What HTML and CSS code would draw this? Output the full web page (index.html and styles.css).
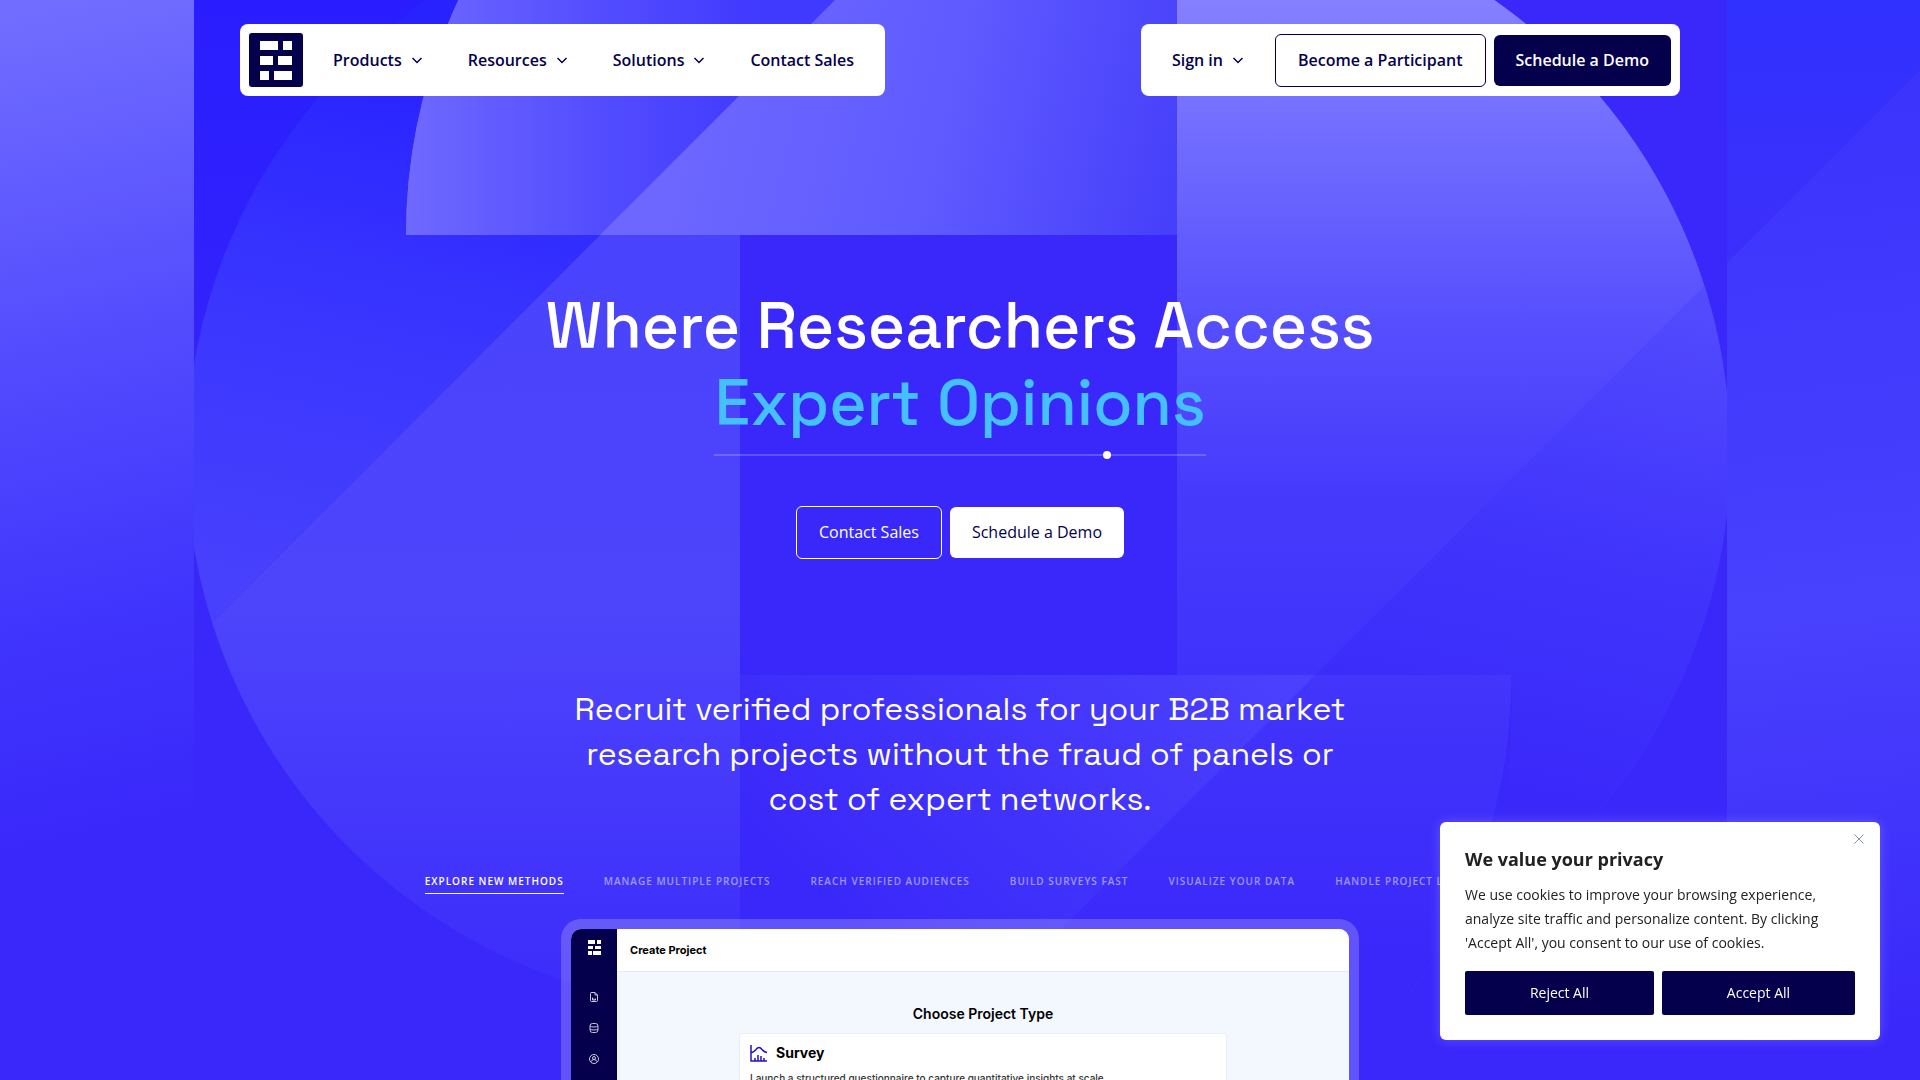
FILE: index.html
```html
<!DOCTYPE html>
<html lang="en">
<head>
    <meta charset="UTF-8">
    <meta name="viewport" content="width=device-width, initial-scale=1">
    <title>Where Researchers Access Expert Opinions</title>
    <link rel="stylesheet" href="styles.css">
</head>
<body>

<svg class="backdrop" viewBox="0 0 1920 1080" preserveAspectRatio="xMidYMin slice" aria-hidden="true">
    <defs>
        <linearGradient id="sideLeft" gradientUnits="userSpaceOnUse" x1="0" y1="0" x2="190" y2="820">
            <stop offset="0" stop-color="#726fff"/>
            <stop offset=".45" stop-color="#5049fe"/>
            <stop offset=".75" stop-color="#3f34fd"/>
            <stop offset="1" stop-color="#3a28fa"/>
        </linearGradient>
        <linearGradient id="corner" gradientUnits="userSpaceOnUse" x1="194" y1="0" x2="194" y2="620">
            <stop offset="0" stop-color="#291dff"/>
            <stop offset="1" stop-color="#3a28fa"/>
        </linearGradient>
        <linearGradient id="discLeftTop" gradientUnits="userSpaceOnUse" x1="440" y1="60" x2="320" y2="600">
            <stop offset="0" stop-color="#2822ff"/>
            <stop offset=".5" stop-color="#3a36ff"/>
            <stop offset="1" stop-color="#4740fc"/>
        </linearGradient>
        <linearGradient id="discLeft" gradientUnits="userSpaceOnUse" x1="0" y1="235" x2="0" y2="1060">
            <stop offset="0" stop-color="#4a43fd"/>
            <stop offset=".45" stop-color="#4d45fc"/>
            <stop offset="1" stop-color="#3a28fa"/>
        </linearGradient>
        <linearGradient id="quarterA" gradientUnits="userSpaceOnUse" x1="406" y1="0" x2="760" y2="0">
            <stop offset="0" stop-color="#6f69ff"/>
            <stop offset=".5" stop-color="#554fff"/>
            <stop offset="1" stop-color="#4039ff"/>
        </linearGradient>
        <linearGradient id="quarterB" gradientUnits="userSpaceOnUse" x1="700" y1="60" x2="1177" y2="170">
            <stop offset="0" stop-color="#6d67ff"/>
            <stop offset=".5" stop-color="#5f5bff"/>
            <stop offset="1" stop-color="#4740fb"/>
        </linearGradient>
        <linearGradient id="discRight" gradientUnits="userSpaceOnUse" x1="0" y1="0" x2="0" y2="700">
            <stop offset="0" stop-color="#8480ff"/>
            <stop offset=".2" stop-color="#716cff"/>
            <stop offset=".45" stop-color="#5750fe"/>
            <stop offset=".7" stop-color="#463bfc"/>
            <stop offset="1" stop-color="#3f31fb"/>
        </linearGradient>
        <linearGradient id="discRightLow" gradientUnits="userSpaceOnUse" x1="1727" y1="280" x2="1600" y2="820">
            <stop offset="0" stop-color="#544dfe"/>
            <stop offset=".5" stop-color="#4136fc"/>
            <stop offset="1" stop-color="#3a28fa"/>
        </linearGradient>
        <linearGradient id="sideRight" gradientUnits="userSpaceOnUse" x1="0" y1="0" x2="0" y2="220">
            <stop offset="0" stop-color="#3030ff"/>
            <stop offset="1" stop-color="#3b30fb"/>
        </linearGradient>
        <linearGradient id="sideRightLow" gradientUnits="userSpaceOnUse" x1="1727" y1="100" x2="1830" y2="1040">
            <stop offset="0" stop-color="#3c33fd"/>
            <stop offset=".55" stop-color="#4841fd"/>
            <stop offset="1" stop-color="#3a28fa"/>
        </linearGradient>
        <linearGradient id="tail" gradientUnits="userSpaceOnUse" x1="900" y1="980" x2="1250" y2="600">
            <stop offset="0" stop-color="#3a28fa"/>
            <stop offset="1" stop-color="#4c42fd"/>
        </linearGradient>
        <linearGradient id="tailLow" gradientUnits="userSpaceOnUse" x1="0" y1="675" x2="0" y2="960">
            <stop offset="0" stop-color="#4335fb"/>
            <stop offset="1" stop-color="#3a28fa"/>
        </linearGradient>
        <!-- two 45 degree rays split the shapes -->
        <clipPath id="aboveFirst"><path d="M194 0H835L194 641Z"/></clipPath>
        <clipPath id="belowFirst"><path d="M835 0H1920V1080H194V641Z"/></clipPath>
        <clipPath id="belowSecond"><path d="M1990 0V1080H910Z"/></clipPath>
    </defs>
    <rect width="194" height="1080" fill="url(#sideLeft)"/>
    <path d="M194 0H835L194 641Z" fill="url(#corner)"/>
    <path d="M740 235V1009A553 553 0 0 1 499 -42L740 -42Z" fill="url(#discLeft)" clip-path="url(#belowFirst)"/>
    <path d="M740 235V1009A553 553 0 0 1 499 -42L740 -42Z" fill="url(#discLeftTop)" clip-path="url(#aboveFirst)"/>
    <path d="M406 235A553 553 0 0 1 959 -318H1177V235Z" fill="url(#quarterB)"/>
    <path d="M406 235A553 553 0 0 1 959 -318H1177V235Z" fill="url(#quarterA)" clip-path="url(#aboveFirst)"/>
    <path d="M1511 675A553 553 0 0 1 958 1228H740V675Z" fill="url(#tail)"/>
    <path d="M1511 675A553 553 0 0 1 958 1228H740V675Z" fill="url(#tailLow)" clip-path="url(#belowSecond)"/>
    <path d="M1177 -100A553 553 0 0 1 1511 894A553 553 0 0 0 1511 675H1177Z" fill="url(#discRight)"/>
    <path d="M1177 -100A553 553 0 0 1 1465 925A553 553 0 0 0 1511 675H1177Z" fill="url(#discRightLow)" clip-path="url(#belowSecond)"/>
    <rect x="1727" width="193" height="1080" fill="url(#sideRight)"/>
    <rect x="1727" width="193" height="1080" fill="url(#sideRightLow)" clip-path="url(#belowSecond)"/>
</svg>

<header class="header">
    <nav class="bar">
        <a href="#" class="logo" aria-label="Home">
            <svg viewBox="0 0 54 54">
                <rect width="54" height="54" rx="3" fill="#04004b"/>
                <path fill="#fff" d="M11 8h18v9H11zM34 8h9v9h-9zM11 23h13v9H11zM29 23h14v9H29zM11 38h9v9h-9zM25 38h18v9H25z"/>
            </svg>
        </a>
        <a href="#" class="link">Products <svg class="chevron" viewBox="0 0 12 12"><path d="M1.500 4l4.500 4.500 4.500-4.500"/></svg></a>
        <a href="#" class="link">Resources <svg class="chevron" viewBox="0 0 12 12"><path d="M1.500 4l4.500 4.500 4.500-4.500"/></svg></a>
        <a href="#" class="link">Solutions <svg class="chevron" viewBox="0 0 12 12"><path d="M1.500 4l4.500 4.500 4.500-4.500"/></svg></a>
        <a href="#" class="link">Contact Sales</a>
    </nav>
    <div class="bar account">
        <a href="#" class="link">Sign in <svg class="chevron" viewBox="0 0 12 12"><path d="M1.500 4l4.500 4.500 4.500-4.500"/></svg></a>
        <a href="#" class="btn outline">Become a Participant</a>
        <a href="#" class="btn dark">Schedule a Demo</a>
    </div>
</header>

<main class="hero">
    <h1>Where Researchers Access<br><span class="accent">Expert Opinions</span></h1>
    <div class="track"><span class="dot"></span></div>
    <div class="actions">
        <a href="#" class="btn ghost">Contact Sales</a>
        <a href="#" class="btn white">Schedule a Demo</a>
    </div>
    <p class="lead">Recruit verified professionals for your B2B market<br>research projects without the fraud of panels or<br>cost of expert networks.</p>

    <div class="tabs">
        <button class="tab active">Explore new methods</button>
        <button class="tab">Manage multiple projects</button>
        <button class="tab">Reach verified audiences</button>
        <button class="tab">Build surveys fast</button>
        <button class="tab">Visualize your data</button>
        <button class="tab">Handle project logistics</button>
    </div>

    <div class="frame">
        <div class="app">
            <div class="side">
                <svg class="mark" viewBox="0 0 13 15"><path fill="#fff" d="M0 0h7v4H0zM9 0h4v4H9zM0 6h5v3H0zM7 6h6v3H7zM0 11h4v4H0zM5 11h8v4H5z"/></svg>
                <svg class="item" viewBox="0 0 20 20"><path d="M4 1h8l5 5v11q0 2-2 2H5q-2 0-2-2V3q0-2 2-2M12 1v5h5M7 11v5h6v-3M10 13v3"/></svg>
                <svg class="item" viewBox="0 0 20 20"><rect x="2" y="1" width="16" height="18" rx="5"/><path d="M2 6q2 2 8 2t8-2M2 12q2 2 8 2t8-2"/></svg>
                <svg class="item" viewBox="0 0 20 20"><circle cx="10" cy="10" r="9"/><circle cx="10" cy="8" r="3"/><path d="M5 15q0-4 5-4t5 4"/></svg>
            </div>
            <div class="main">
                <div class="app-title">Create Project</div>
                <h2>Choose Project Type</h2>
                <div class="card">
                    <h3>
                        <svg viewBox="0 0 18 18"><path d="M1 1v16h16M1 9Q4 8 6 5.500Q9 1.500 12 5.500Q14 8 17 8.500M5 17v-3M8 17v-6M11 17v-5M14 17v-3"/></svg>
                        Survey
                    </h3>
                    <p>Launch a structured questionnaire to capture quantitative insights at scale</p>
                </div>
            </div>
        </div>
    </div>
</main>

<section class="cookie" aria-label="Cookie consent">
    <button class="close" aria-label="Close">
        <svg viewBox="0 0 10 10"><path d="M.5 .5l9 9M9.500 .5l-9 9"/></svg>
    </button>
    <h2>We value your privacy</h2>
    <p>We use cookies to improve your browsing experience, analyze site traffic and personalize content. By clicking 'Accept All', you consent to our use of cookies.</p>
    <div class="choices">
        <button>Reject All</button>
        <button>Accept All</button>
    </div>
</section>

</body>
</html>
```
FILE: styles.css
```css
* {
    box-sizing: border-box;
    margin: 0;
    padding: 0;
}
body {
    position: relative;
    height: 100vh;
    overflow: hidden;
    background: #3a28fa;
    color: #fff;
    font-family: "Open Sans", "Noto Sans", sans-serif;
    font-size: 16px;
}
a {
    color: inherit;
    text-decoration: none;
}
button {
    border: 0;
    background: none;
    color: inherit;
    font: inherit;
    cursor: pointer;
}
svg {
    display: block;
}
.backdrop {
    position: absolute;
    top: 0;
    left: 0;
    width: 100%;
    height: 100%;
    z-index: -1;
}

/* header */
.header {
    display: flex;
    justify-content: space-between;
    width: 75%;
    margin: 0 auto;
    padding-top: 24px;
}
.bar {
    display: flex;
    align-items: center;
    gap: 45px;
    height: 72px;
    padding: 0 31px 0 9px;
    border-radius: 8px;
    background: #fff;
    color: #04004b;
    font-weight: 600;
}
.logo {
    width: 54px;
    margin-right: -15px;
}
.link {
    display: flex;
    align-items: center;
    gap: 9px;
}
.chevron {
    width: 12px;
    height: 12px;
    fill: none;
    stroke: #04004b;
    stroke-width: 1.5;
}
.account {
    gap: 8px;
    padding: 0 9px 0 31px;
}
.account .link {
    margin-right: 23px;
}

/* buttons */
.btn {
    padding: 0 22px;
    border-radius: 6px;
    line-height: 51px;
}
.outline {
    border: 1px solid #04004b;
}
.dark {
    background: #04004b;
    color: #fff;
}
.ghost {
    border: 1px solid #fff;
}
.white {
    background: #fff;
    color: #04004b;
}

/* hero */
.hero {
    display: flex;
    flex-direction: column;
    align-items: center;
    padding-top: 192px;
    text-align: center;
}
h1 {
    font-family: "Space Grotesk", Inter, sans-serif;
    font-size: 64px;
    font-weight: 500;
    line-height: 77px;
}
.accent {
    color: #44c0ff;
}
.track {
    position: relative;
    width: 492px;
    height: 2px;
    margin-top: 12px;
    background: rgba(255, 255, 255, .2);
}
.dot {
    position: absolute;
    top: -3px;
    left: 79%;
    width: 8px;
    height: 8px;
    border-radius: 50%;
    background: #fff;
}
.actions {
    display: flex;
    align-items: center;
    gap: 8px;
    margin-top: 50px;
}
.lead {
    margin-top: 128px;
    font-family: "Space Grotesk", Inter, sans-serif;
    font-size: 32px;
    font-weight: 400;
    line-height: 45px;
}
.tabs {
    display: flex;
    gap: 40px;
    margin-top: 48px;
}
.tab {
    height: 24px;
    padding-bottom: 2px;
    border-bottom: 1px solid transparent;
    color: rgba(255, 255, 255, .5);
    font-size: 10px;
    font-weight: 600;
    letter-spacing: 1px;
    text-transform: uppercase;
    white-space: nowrap;
}
.tab.active {
    border-color: #fff;
    color: #fff;
}

/* app preview */
.frame {
    width: 798px;
    margin-top: 25px;
    padding: 10px 10px 0;
    border-radius: 20px 20px 0 0;
    background: rgba(255, 255, 255, .2);
    color: #000;
    font-family: Inter, sans-serif;
    text-align: left;
}
.app {
    display: flex;
    height: 440px;
    border-radius: 10px 10px 0 0;
    background: #f3f7fe;
    overflow: hidden;
}
.side {
    display: flex;
    flex-direction: column;
    align-items: center;
    gap: 21px;
    width: 46px;
    padding-top: 11px;
    background: #04004b;
}
.mark {
    width: 13px;
    height: 15px;
    margin-bottom: 16px;
}
.item {
    width: 10px;
    height: 10px;
    fill: none;
    stroke: #c9c8dc;
    stroke-width: 2;
}
.main {
    flex: 1;
}
.app-title {
    height: 43px;
    padding-left: 13px;
    border-bottom: 1px solid #e6eaf2;
    background: #fff;
    font-size: 11px;
    font-weight: 700;
    line-height: 43px;
}
.main h2 {
    margin-top: 31px;
    font-size: 14px;
    font-weight: 600;
    line-height: 22px;
    text-align: center;
}
.card {
    width: 488px;
    height: 200px;
    margin: 8px auto 0;
    padding: 10px;
    border: 1px solid #e9eef6;
    border-radius: 3px;
    background: #fff;
}
.card h3 {
    display: flex;
    align-items: center;
    gap: 8px;
    font-size: 14px;
    line-height: 18px;
}
.card h3 svg {
    width: 18px;
    height: 18px;
    fill: none;
    stroke: #2410c8;
    stroke-width: 1.5;
}
.card p {
    margin-top: 8px;
    color: #333;
    font-size: 10px;
    font-weight: 500;
    line-height: 16px;
}

/* cookie notice */
.cookie {
    position: fixed;
    right: 40px;
    bottom: 40px;
    width: 440px;
    padding: 24px 25px 25px;
    border-radius: 6px;
    background: #fff;
    box-shadow: 0 0 12px rgba(255, 255, 255, .2);
    color: #212121;
}
.cookie h2 {
    font-size: 18px;
    line-height: 26px;
}
.cookie p {
    margin-top: 11px;
    font-size: 14px;
    line-height: 24px;
}
.choices {
    display: flex;
    gap: 8px;
    margin-top: 16px;
}
.choices button {
    flex: 1 1 auto;
    height: 44px;
    padding-bottom: 1px;
    border-radius: 2px;
    background: #04004b;
    color: #fff;
    font-size: 14px;
}
.close {
    position: absolute;
    top: 12px;
    right: 16px;
    padding: 0;
}
.close svg {
    width: 10px;
    height: 10px;
    stroke: #8591a5;
}
```
